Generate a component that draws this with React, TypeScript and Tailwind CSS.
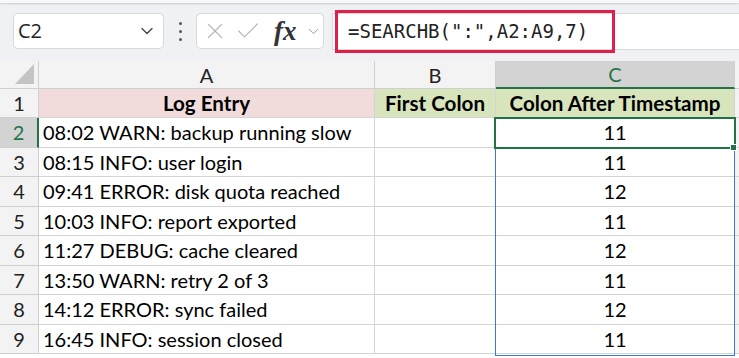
import { ChevronDown, X, Check } from "lucide-react";

const rows = [
  { log: "08:02 WARN: backup running slow", c: 11 },
  { log: "08:15 INFO: user login", c: 11 },
  { log: "09:41 ERROR: disk quota reached", c: 12 },
  { log: "10:03 INFO: report exported", c: 11 },
  { log: "11:27 DEBUG: cache cleared", c: 12 },
  { log: "13:50 WARN: retry 2 of 3", c: 11 },
  { log: "14:12 ERROR: sync failed", c: 12 },
  { log: "16:45 INFO: session closed", c: 11 },
];

const cellFont = { fontFamily: "Lato, 'Open Sans', sans-serif" };

export default function App() {
  return (
    <div className="w-[739px] h-[358px] overflow-hidden bg-white flex flex-col" style={cellFont}>
      {/* toolbar */}
      <div className="h-[61px] bg-[#eff1f4] relative flex items-start pt-[13px] pl-[13px]">
        <div className="absolute top-0 left-0 right-0 h-[3px] bg-[#f7f8f9] shadow-[0_1px_2px_rgba(0,0,0,0.15)]" />
        <div className="w-[151px] h-[36px] bg-white border border-[#d6d8db] rounded-[5px] flex items-center justify-between pl-[4px] pr-[6px]">
          <span className="text-[20px] text-[#222]" style={{ fontFamily: "'Open Sans', sans-serif" }}>C2</span>
          <ChevronDown size={20} strokeWidth={1.6} className="text-[#444]" />
        </div>
        <div className="w-[32px] h-[36px] flex flex-col items-center justify-center gap-[5px]">
          <div className="w-[3px] h-[3px] bg-[#555] rounded-full" />
          <div className="w-[3px] h-[3px] bg-[#555] rounded-full" />
          <div className="w-[3px] h-[3px] bg-[#555] rounded-full" />
        </div>
        <div className="w-[128px] h-[36px] bg-white border border-[#d6d8db] rounded-[5px] flex items-center pl-[5px] gap-[6px]">
          <X size={26} strokeWidth={1.1} className="text-[#b8b8b8]" />
          <Check size={28} strokeWidth={1.1} className="text-[#b8b8b8]" />
          <span className="text-[27px] italic font-bold text-[#333] ml-[6px] leading-none" style={{ fontFamily: "'Liberation Serif', serif" }}>fx</span>
          <ChevronDown size={17} strokeWidth={1.4} className="text-[#999] ml-[2px]" />
        </div>
        <div className="ml-[8px] flex-1 h-[37px] bg-white border-t border-b border-l border-[#d6d8db] relative">
          <div className="absolute left-[2px] -top-[4px] w-[280px] h-[43px] border-[3px] border-[#e0204a] flex items-center pl-[10px]">
            <span className="text-[19px] text-[#222] whitespace-nowrap" style={{ fontFamily: "'DejaVu Sans Mono', 'Liberation Mono', monospace" }}>=SEARCHB(":",A2:A9,7)</span>
          </div>
        </div>
      </div>

      {/* grid */}
      <div className="relative flex-1 bg-white">
        <div className="grid grid-cols-[39px_336px_121px_239px_1fr] grid-rows-[28px_29px_29.5px_29.5px_29.5px_29.5px_29.5px_29.5px_29.5px_29.5px]">
          {/* header row */}
          <div className="bg-[#f3f3f3] border-r border-b border-[#cfcfcf] relative">
            <div className="absolute right-[4px] bottom-[4px] w-0 h-0 border-l-[19px] border-l-transparent border-b-[20px] border-b-[#c4c4c4]" />
          </div>
          <div className="bg-[#f3f3f3] border-r border-b border-[#cfcfcf] flex items-center justify-center text-[20px] text-[#222]">A</div>
          <div className="bg-[#f3f3f3] border-r border-b border-[#cfcfcf] flex items-center justify-center text-[20px] text-[#222]">B</div>
          <div className="bg-[#d3d3d3] border-r border-[#cfcfcf] border-b-2 border-b-[#217346] flex items-center justify-center text-[20px] text-[#217346]">C</div>
          <div className="bg-[#f3f3f3] border-b border-[#cfcfcf]" />

          {/* row 1 */}
          <div className="bg-[#f3f3f3] border-r border-b border-[#cfcfcf] flex items-center justify-center text-[20px] text-[#222]">1</div>
          <div className="bg-[#f2dcdb] border-r border-b border-[#d4d4d4] flex items-center justify-center text-[20.6px] font-bold text-black">Log Entry</div>
          <div className="bg-[#d8e4bc] border-r border-b border-[#d4d4d4] flex items-center justify-center text-[20.6px] font-bold text-black whitespace-nowrap">First Colon</div>
          <div className="bg-[#d8e4bc] border-r border-b border-[#d4d4d4] flex items-center justify-center text-[20.6px] font-bold text-black whitespace-nowrap">Colon After Timestamp</div>
          <div className="bg-[#f3f3f3] border-b border-[#d4d4d4]" />

          {rows.map((r, i) => {
            const sel = i === 0;
            return [
              <div
                key={`h${i}`}
                className={
                  sel
                    ? "bg-[#d3d3d3] border-r-2 border-r-[#217346] border-b border-b-[#cfcfcf] flex items-center justify-center text-[20px] text-[#217346]"
                    : "bg-[#f3f3f3] border-r border-b border-[#cfcfcf] flex items-center justify-center text-[20px] text-[#222]"
                }
              >
                {i + 2}
              </div>,
              <div key={`a${i}`} className="border-r border-b border-[#d4d4d4] flex items-center pl-[4px] text-[20px] text-black whitespace-nowrap">
                {r.log}
              </div>,
              <div key={`b${i}`} className="border-r border-b border-[#d4d4d4]" />,
              <div key={`c${i}`} className="border-r border-b border-[#d4d4d4] flex items-center justify-center text-[20px] text-black">
                {r.c}
              </div>,
              <div key={`d${i}`} className="bg-[#f3f3f3] border-b border-[#d4d4d4]" />,
            ];
          })}
        </div>

        {/* spill range outline C2:C9 */}
        <div className="absolute left-[495px] top-[57px] w-[240px] h-[238px] border border-[#3b78d8] pointer-events-none" />
        {/* active cell C2 */}
        <div className="absolute left-[494px] top-[56px] w-[242px] h-[32px] border-2 border-[#217346] pointer-events-none" />
        <div className="absolute left-[730px] top-[83px] w-[7px] h-[7px] bg-[#217346] border border-white pointer-events-none" />
      </div>
    </div>
  );
}
